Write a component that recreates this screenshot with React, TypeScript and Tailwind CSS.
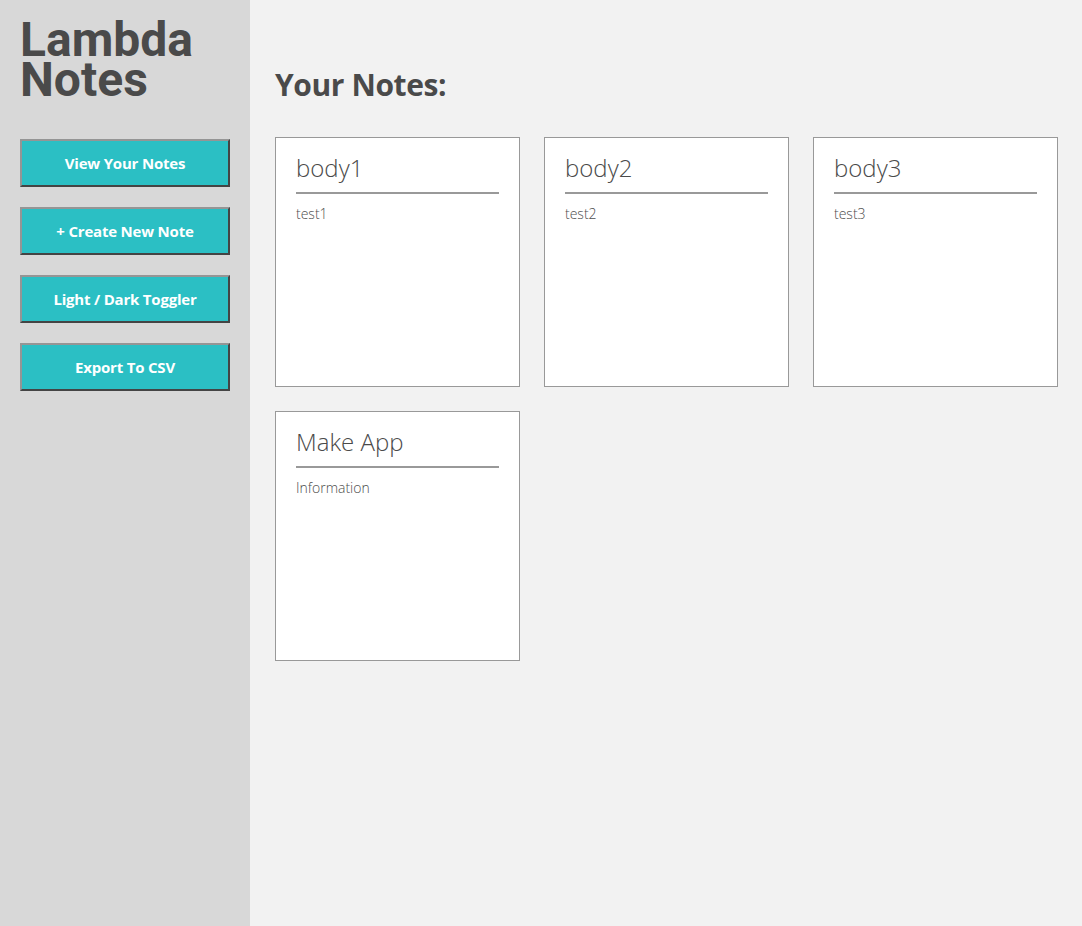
import React from "react";

type Note = { id: number; title: string; body: string };

const notes: Note[] = [
  { id: 1, title: "body1", body: "test1" },
  { id: 2, title: "body2", body: "test2" },
  { id: 3, title: "body3", body: "test3" },
  { id: 4, title: "Make App", body: "Information" },
];

const actions = ["View Your Notes", "+ Create New Note", "Light / Dark Toggler", "Export To CSV"];

const SideButton: React.FC<{ label: string }> = ({ label }) => (
  <button className="w-[210px] h-[48px] bg-[#2bbfc4] text-white text-[15px] font-bold border-t-2 border-l-2 border-b-2 border-r-2 border-t-[#959595] border-l-[#959595] border-b-[#444] border-r-[#444] font-['Open_Sans',sans-serif] tracking-[-0.2px]">
    {label}
  </button>
);

const NoteCard: React.FC<{ note: Note }> = ({ note }) => (
  <div className="h-[250px] bg-white border border-[#999] px-5 pt-[14px]">
    <h3 className="text-[24px] font-light text-[#4a4a4a] leading-[32px] pb-[8px] border-b-2 border-[#999]">
      {note.title}
    </h3>
    <p className="mt-[10px] text-[14px] font-light text-[#4d4d4d] leading-5">{note.body}</p>
  </div>
);

export default function App() {
  return (
    <div className="flex min-h-[926px] font-['Open_Sans',sans-serif]">
      {/* Barra lateral */}
      <aside className="w-[250px] shrink-0 bg-[#d8d8d8] px-5 pt-[20px]">
        <h1 className="font-['Roboto',sans-serif] font-bold text-[48px] leading-[40px] text-[#4a4a4a]">
          Lambda
          <br />
          Notes
        </h1>
        <div className="mt-[39px] flex flex-col gap-5">
          {actions.map((a) => (
            <SideButton key={a} label={a} />
          ))}
        </div>
      </aside>

      {/* Contenido principal */}
      <main className="flex-1 bg-[#f2f2f2] pl-[25px] pr-6 pt-[65px]">
        <h2 className="text-[30px] font-bold text-[#4a4a4a] leading-[40px] tracking-[-0.4px]">Your Notes:</h2>
        <div className="mt-[32px] grid grid-cols-3 gap-6">
          {notes.map((n) => (
            <NoteCard key={n.id} note={n} />
          ))}
        </div>
      </main>
    </div>
  );
}
